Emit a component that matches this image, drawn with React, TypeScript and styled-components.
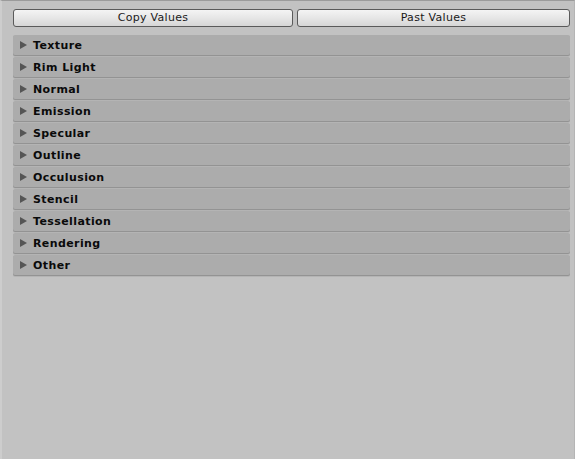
import { FC } from 'react'
import styled, { createGlobalStyle } from 'styled-components'

const GlobalStyle = createGlobalStyle`
  html, body {
    margin: 0;
    padding: 0;
    background: #c2c2c2;
  }
  body {
    font-family: "DejaVu Sans", Verdana, sans-serif;
  }
`

const sections = [
  'Texture',
  'Rim Light',
  'Normal',
  'Emission',
  'Specular',
  'Outline',
  'Occulusion',
  'Stencil',
  'Tessellation',
  'Rendering',
  'Other',
]

const Panel = styled.div`
  box-sizing: border-box;
  width: 575px;
  height: 459px;
  border-top: 1px solid #9b9b9b;
  border-left: 2px solid #cdcdcd;
  border-right: 1px solid #b5b5b5;
  padding: 8px 4px 0 11px;
  background: #c2c2c2;
`

const Toolbar = styled.div`
  display: grid;
  grid-template-columns: 280px 273px;
  gap: 4px;
  margin-bottom: 8px;
`

const ToolButton = styled.button`
  box-sizing: border-box;
  height: 18px;
  padding: 0;
  border: 1px solid #5a5a5a;
  border-radius: 3px;
  background: linear-gradient(to bottom, #f4f4f4 0%, #e6e6e6 50%, #d6d6d6 100%);
  font-family: "DejaVu Sans", Verdana, sans-serif;
  font-size: 11px;
  color: #1a1a1a;
  letter-spacing: 0.3px;
  line-height: 16px;
`

const List = styled.div`
  display: flex;
  flex-direction: column;
  gap: 2px;
`

const Foldout = styled.div`
  box-sizing: border-box;
  display: flex;
  align-items: center;
  gap: 6px;
  width: 557px;
  height: 20px;
  padding-left: 7px;
  border-radius: 2px;
  background: #acacac;
  box-shadow: 0 1px 0 #939393, 0 2px 0 #b4b4b4;
`

const Arrow = styled.span`
  width: 0;
  height: 0;
  border-top: 4px solid transparent;
  border-bottom: 4px solid transparent;
  border-left: 7px solid #555555;
`

const Label = styled.span`
  font-family: "DejaVu Sans", Verdana, sans-serif;
  font-weight: bold;
  font-size: 11px;
  color: #0a0a0a;
  letter-spacing: 0.4px;
`

const App: FC = () => (
  <>
    <GlobalStyle />
    <Panel>
      <Toolbar>
        <ToolButton>Copy Values</ToolButton>
        <ToolButton>Past Values</ToolButton>
      </Toolbar>
      <List>
        {sections.map((name) => (
          <Foldout key={name}>
            <Arrow />
            <Label>{name}</Label>
          </Foldout>
        ))}
      </List>
    </Panel>
  </>
)

export default App
